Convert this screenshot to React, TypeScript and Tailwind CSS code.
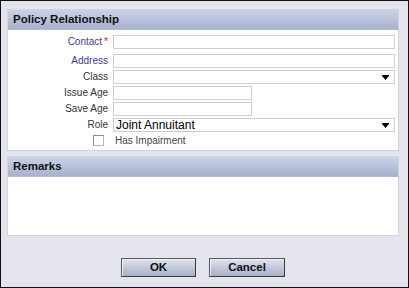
import React from "react";

const font = { fontFamily: '"Liberation Sans", Arial, sans-serif' };

function Arrow() {
  return (
    <svg width="7" height="5" viewBox="0 0 7 5" className="absolute right-[5px] top-[4px]">
      <rect x="0" y="0" width="7" height="1" fill="#000" />
      <polygon points="0,1 7,1 3.5,5" fill="#000" />
    </svg>
  );
}

function Row({
  label,
  blue,
  req,
  width,
  select,
  value,
  className,
}: {
  label: string;
  blue?: boolean;
  req?: boolean;
  width?: string;
  select?: boolean;
  value?: string;
  className?: string;
}) {
  return (
    <div className={`flex items-center h-[14px] ${className ?? ""}`}>
      <div
        className={`w-[100px] text-right text-[10px] leading-[14px] ${
          blue ? "text-[#3b3b8f]" : "text-[#333]"
        }`}
      >
        {label}
        {req && <span className="text-[#e0202a] ml-[2px]">*</span>}
      </div>
      <div
        className={`relative ml-[5px] h-[14px] border border-[#cfcfcf] bg-white ${
          width ?? "w-[282px]"
        }`}
      >
        {value && (
          <div className="pl-[2px] text-[12px] leading-[13px] text-black">{value}</div>
        )}
        {select && <Arrow />}
      </div>
    </div>
  );
}

function Header({ title }: { title: string }) {
  return (
    <div className="h-[20px] bg-gradient-to-b from-[#c8d3e7] to-[#a9b1cd] border-b border-[#b3bbd0] pl-[5px] flex items-center">
      <span className="text-[11.5px] font-bold text-[#111]">{title}</span>
    </div>
  );
}

function Button({ children, className }: { children: React.ReactNode; className?: string }) {
  return (
    <div
      className={`h-[19px] flex items-center justify-center border border-[#5a5a5a] border-r-[#3a3a3a] border-b-[#3a3a3a] bg-gradient-to-b from-[#dfe3ee] via-[#c3c9da] to-[#a9b0c6] text-[11.5px] font-bold text-[#111] shadow-[inset_1px_1px_0_#f0f2f8] ${className ?? ""}`}
    >
      {children}
    </div>
  );
}

export default function App() {
  return (
    <div
      style={font}
      className="w-[409px] h-[288px] border border-[#111] bg-[#e3e4ec] pt-[8px] pl-[6px] pr-[9px] flex flex-col"
    >
      <div className="w-[392px] h-[142px] border border-[#d2d3dc] bg-white flex flex-col">
        <Header title="Policy Relationship" />
        <div className="pt-[5px] flex flex-col">
          <Row label="Contact" blue req />
          <Row label="Address" blue className="mt-[5px]" />
          <Row label="Class" select className="mt-[2px]" />
          <Row label="Issue Age" width="w-[139px]" className="mt-[2px]" />
          <Row label="Save Age" width="w-[139px]" className="mt-[2px]" />
          <Row label="Role" select value="Joint Annuitant" className="mt-[2px]" />
          <div className="flex items-center mt-[3px] h-[11px]">
            <div className="ml-[85px] w-[11px] h-[11px] border border-[#b8b8b8] border-t-[#8a8a8a] border-l-[#8a8a8a] bg-white" />
            <span className="ml-[11px] text-[10px] leading-[11px] text-[#444]">Has Impairment</span>
          </div>
        </div>
      </div>
      <div className="mt-[5px] w-[392px] h-[80px] border border-[#d2d3dc] bg-white flex flex-col">
        <Header title="Remarks" />
      </div>
      <div className="flex mt-[22px] pl-[114px] gap-[13px]">
        <Button className="w-[75px]">OK</Button>
        <Button className="w-[76px]">Cancel</Button>
      </div>
    </div>
  );
}
